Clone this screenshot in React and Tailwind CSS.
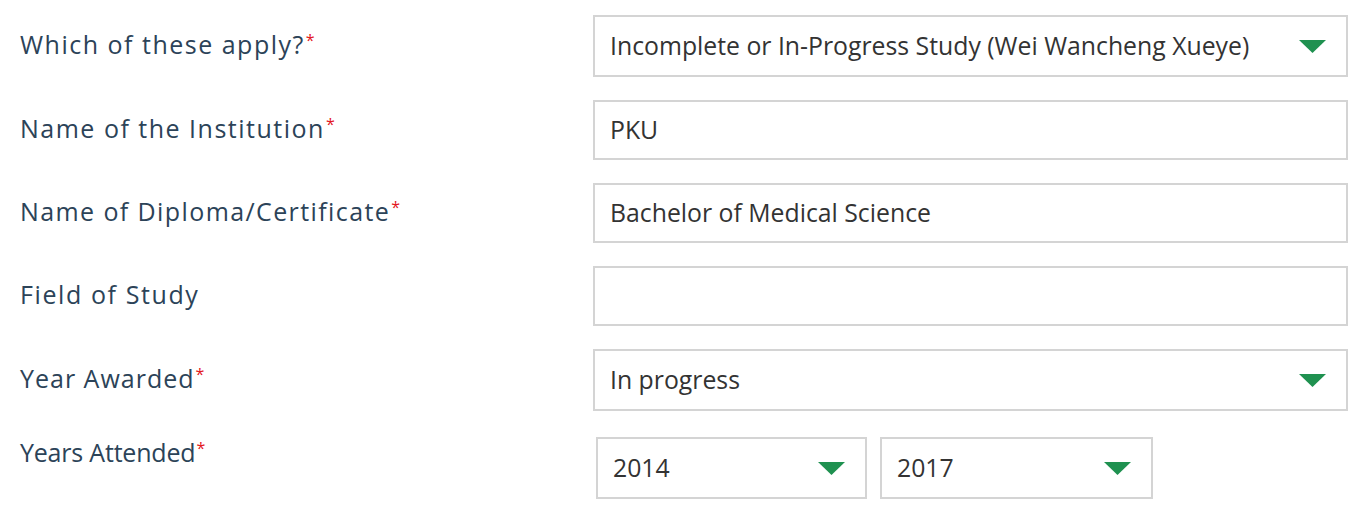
import React from "react";

function Arrow() {
  return (
    <svg width="27" height="13" viewBox="0 0 27 13" className="shrink-0">
      <polygon points="0,0 27,0 13.5,13" fill="#1f9150" />
    </svg>
  );
}

function Label({ children, req, className = "" }) {
  return (
    <div className={"w-[573px] shrink-0 text-[25px] text-[#2c4358] " + className}>
      {children}
      {req && <span className="text-[#e3141c] text-[16px] align-top relative top-[2px] ml-[1px] tracking-normal">*</span>}
    </div>
  );
}

function Box({ children, select, className = "" }) {
  return (
    <div className={"flex items-center justify-between border-2 border-[#d4d4d4] bg-white pl-[15px] pr-[20px] text-[24.8px] text-[#333333] " + className}>
      <span>{children}</span>
      {select && <Arrow />}
    </div>
  );
}

export default function App() {
  return (
    <div className="w-[1368px] h-[531px] bg-white pl-[20px] pt-[15px]" style={{ fontFamily: '"Open Sans", sans-serif' }}>
      <div className="flex flex-col gap-[23px]">
        <div className="flex items-center">
          <Label req className="mt-[-3px] tracking-[1.5px]">Which of these apply?</Label>
          <Box select className="w-[755px] h-[62px]">Incomplete or In-Progress Study (Wei Wancheng Xueye)</Box>
        </div>
        <div className="flex items-center">
          <Label req className="mt-[-2px] tracking-[1.5px]">Name of the Institution</Label>
          <Box className="w-[755px] h-[60px]">PKU</Box>
        </div>
        <div className="flex items-center">
          <Label req className="mt-[-2px] tracking-[1.4px]">Name of Diploma/Certificate</Label>
          <Box className="w-[755px] h-[60px]">Bachelor of Medical Science</Box>
        </div>
        <div className="flex items-center">
          <Label className="mt-[-2px] tracking-[1.6px]">Field of Study</Label>
          <Box className="w-[755px] h-[60px]"></Box>
        </div>
        <div className="flex items-center">
          <Label req className="mt-[-3px] tracking-[1px]">Year Awarded</Label>
          <Box select className="w-[755px] h-[62px]">In progress</Box>
        </div>
      </div>
      <div className="flex items-start mt-[26px]">
        <Label req className="mt-[-3px] tracking-[-0.2px]">Years Attended</Label>
        <div className="flex gap-[13px] ml-[3px]">
          <Box select className="w-[271px] h-[62px] pr-[13px]">2014</Box>
          <Box select className="w-[273px] h-[62px] pr-[14px]">2017</Box>
        </div>
      </div>
    </div>
  );
}
